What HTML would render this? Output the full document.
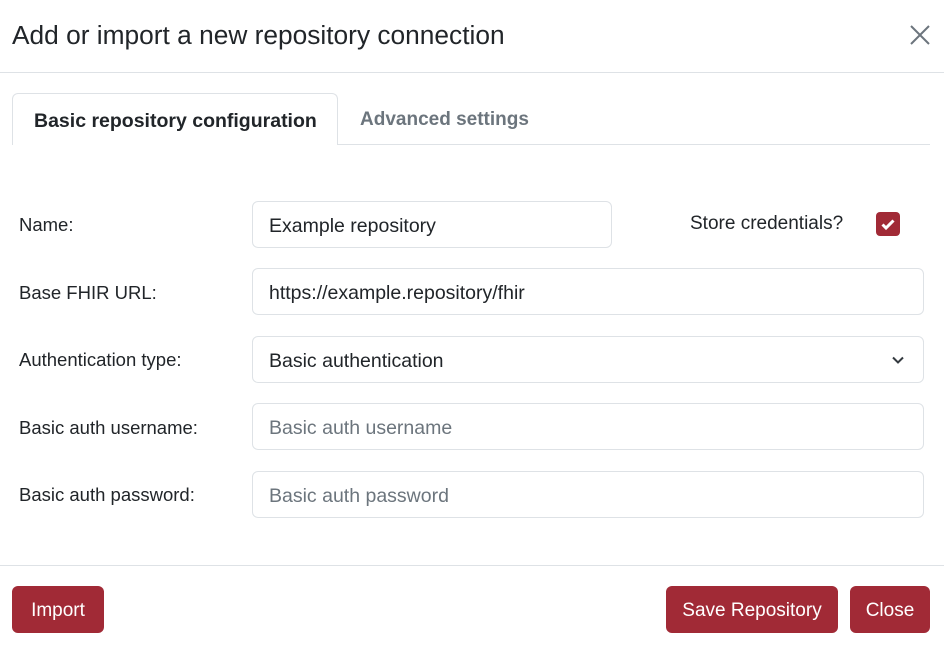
<!DOCTYPE html>
<html><head><style>
*{box-sizing:border-box;margin:0;padding:0}
body{width:944px;height:647px;background:#fff;font-family:"Liberation Sans",sans-serif;color:#212529;position:relative;overflow:hidden}
.a{position:absolute}
.lbl{position:absolute;left:19px;font-size:18.5px;color:#212529;line-height:22px}
.inp{position:absolute;left:252px;height:47px;border:1px solid #dee2e6;border-radius:6px;font-size:19.5px;padding:0 16px;line-height:48px;color:#212529}
.ph{color:#6c757d}
.btn{position:absolute;top:586px;height:47px;background:#a12a36;color:#fff;border-radius:6px;font-size:19px;line-height:49px;text-align:center}
</style></head><body>
<div class="a" style="left:12px;top:20px;font-size:26.3px;line-height:30px">Add or import a new repository connection</div>
<svg class="a" style="left:908px;top:23px" width="24" height="24" viewBox="0 0 24 24"><path d="M3 3L21 21M21 3L3 21" stroke="#6c757d" stroke-width="2"/></svg>
<div class="a" style="left:0;top:72px;width:944px;height:1px;background:#dee2e6"></div>
<div class="a" style="left:12px;top:144px;width:918px;height:1px;background:#dee2e6"></div>
<div class="a" style="left:12px;top:93px;width:326px;height:52px;border:1px solid #dee2e6;border-bottom:none;border-radius:6px 6px 0 0;background:#fff;font-weight:bold;font-size:19.5px;line-height:54px;padding-left:21px">Basic repository configuration</div>
<div class="a" style="left:360px;top:93px;line-height:54px;font-size:19px;font-weight:bold;color:#6c757d">Advanced settings</div>

<div class="lbl" style="top:214px">Name:</div>
<div class="inp" style="top:201px;width:360px">Example repository</div>
<div class="a" style="left:690px;top:213px;font-size:19px;line-height:22px">Store credentials?</div>
<div class="a" style="left:876px;top:212px;width:24px;height:24px;background:#a12a36;border-radius:4px"><svg width="24" height="24" viewBox="0 0 24 24"><path d="M6.5 12.5L10 16L17.5 8.5" stroke="#fff" stroke-width="3" fill="none"/></svg></div>

<div class="lbl" style="top:282px">Base FHIR URL:</div>
<div class="inp" style="top:268px;width:672px">https://example.repository/fhir</div>

<div class="lbl" style="top:349px">Authentication type:</div>
<div class="inp" style="top:336px;width:672px">Basic authentication</div>
<svg class="a" style="left:890px;top:352px" width="16" height="16" viewBox="0 0 16 16"><path d="M3 5.5L8 10.5L13 5.5" stroke="#343a40" stroke-width="2" fill="none"/></svg>

<div class="lbl" style="top:417px">Basic auth username:</div>
<div class="inp ph" style="top:403px;width:672px">Basic auth username</div>

<div class="lbl" style="top:484px">Basic auth password:</div>
<div class="inp ph" style="top:471px;width:672px">Basic auth password</div>

<div class="a" style="left:0;top:565px;width:944px;height:1px;background:#dee2e6"></div>
<div class="btn" style="left:12px;width:92px">Import</div>
<div class="btn" style="left:666px;width:172px">Save Repository</div>
<div class="btn" style="left:850px;width:80px">Close</div>
</body></html>
